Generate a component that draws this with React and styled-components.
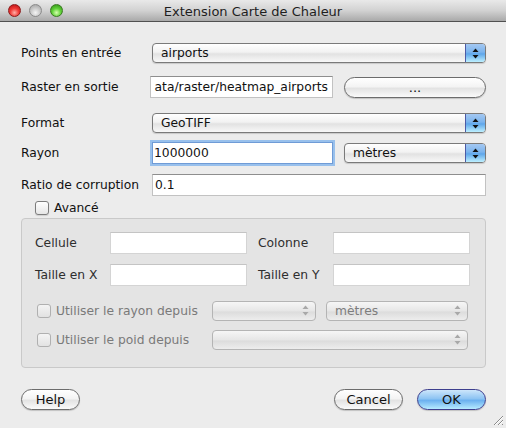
import styled, { createGlobalStyle, css } from "styled-components";

const GlobalStyle = createGlobalStyle`
  html, body {
    margin: 0;
    padding: 0;
    background: #ececec;
  }
  * {
    box-sizing: border-box;
  }
`;

const FONT = `"DejaVu Sans", "Lucida Grande", sans-serif`;

// small pieces
const Arrows = ({ disabled }) => (
  <svg width="7" height="11" viewBox="0 0 7 11">
    <path d="M3.5 0.5 L6.5 4 L0.5 4 Z" fill={disabled ? "#a8a8a8" : "#111"} />
    <path d="M3.5 10.5 L6.5 7 L0.5 7 Z" fill={disabled ? "#a8a8a8" : "#111"} />
  </svg>
);

const Popup = ({ value, disabled, width }) => (
  <Select $disabled={disabled} style={width ? { width } : undefined}>
    <SelectText $disabled={disabled}>{value}</SelectText>
    <ArrowBox $disabled={disabled}>
      <Arrows disabled={disabled} />
    </ArrowBox>
  </Select>
);

const App = () => {
  return (
    <Window>
      <GlobalStyle />
      <TitleBar>
        <Lights>
          <Light $color="red" />
          <Light $color="gray" />
          <Light $color="green" />
        </Lights>
        <Title>Extension Carte de Chaleur</Title>
      </TitleBar>

      <Body>
        <FormRow $top={21} $h={20}>
          <Label>Points en entrée</Label>
          <Popup value="airports" />
        </FormRow>

        <FormRow $top={13} $h={22}>
          <Label>Raster en sortie</Label>
          <Inline>
            <TextField $shift={-2} style={{ width: 183 }} $end>
              ata/raster/heatmap_airports
            </TextField>
            <PushButton $wide>...</PushButton>
          </Inline>
        </FormRow>

        <FormRow $top={15} $h={20}>
          <Label>Format</Label>
          <Popup value="GeoTIFF" />
        </FormRow>

        <FormRow $top={8} $h={24}>
          <Label>Rayon</Label>
          <Inline>
            <TextField $focused style={{ width: 181 }}>1000000</TextField>
            <Popup value="mètres" width={142} />
          </Inline>
        </FormRow>

        <FormRow $top={9} $h={22}>
          <Label>Ratio de corruption</Label>
          <TextField>0.1</TextField>
        </FormRow>

        <CheckRow $top={4}>
          <CheckBox />
          <CheckLabel>Avancé</CheckLabel>
        </CheckRow>

        <Group>
          <GroupGrid>
            <Label $group>Cellule</Label>
            <TextField $plain />
            <Label $group>Colonne</Label>
            <TextField $plain />
            <Label $group>Taille en X</Label>
            <TextField $plain />
            <Label $group>Taille en Y</Label>
            <TextField $plain />
          </GroupGrid>

          <OptionRow $top={14}>
            <CheckRow>
              <CheckBox $disabled />
              <CheckLabel $disabled>Utiliser le rayon depuis</CheckLabel>
            </CheckRow>
            <OptionSelects>
              <Popup disabled value="" width={104} />
              <Popup disabled value="mètres" width={142} />
            </OptionSelects>
          </OptionRow>

          <OptionRow $top={8}>
            <CheckRow>
              <CheckBox $disabled />
              <CheckLabel $disabled>Utiliser le poid depuis</CheckLabel>
            </CheckRow>
            <OptionSelects>
              <Popup disabled value="" width={256} />
            </OptionSelects>
          </OptionRow>
        </Group>

        <ButtonBar>
          <PushButton style={{ width: 59 }}>Help</PushButton>
          <Spacer />
          <PushButton style={{ width: 69 }}>Cancel</PushButton>
          <PushButton $default style={{ width: 69 }}>OK</PushButton>
        </ButtonBar>
      </Body>

      <Grip width="12" height="12" viewBox="0 0 12 12">
        <path d="M11 2 L2 11 M11 6 L6 11 M11 10 L10 11" stroke="#8a8a8a" strokeWidth="1" />
        <path d="M11 3 L3 11 M11 7 L7 11" stroke="#fff" strokeWidth="1" />
      </Grip>
    </Window>
  );
};

export default App;

const Window = styled.div`
  position: relative;
  width: 506px;
  height: 428px;
  background: #ececec;
  font-family: ${FONT};
  font-size: 12.3px;
  color: #111;
  overflow: hidden;
  display: flex;
  flex-direction: column;
`;

const TitleBar = styled.div`
  position: relative;
  height: 22px;
  flex: none;
  display: flex;
  align-items: center;
  justify-content: center;
  background: linear-gradient(#e9e9e9, #d2d2d2 50%, #a9a9a9);
  border-bottom: 1px solid #515151;
`;

const Lights = styled.div`
  position: absolute;
  left: 8px;
  top: 4px;
  display: flex;
  gap: 8px;
`;

const lightColors = {
  red: css`
    background: radial-gradient(circle at 50% 70%, #ffb0a8 0%, #f03a36 45%, #b00c10 100%);
    border: 1px solid #8d1a1a;
  `,
  gray: css`
    background: radial-gradient(circle at 50% 70%, #f4f4f4 0%, #c8c8c8 50%, #9c9c9c 100%);
    border: 1px solid #8a8a8a;
  `,
  green: css`
    background: radial-gradient(circle at 50% 70%, #d8ffb0 0%, #62d23a 45%, #2c8a12 100%);
    border: 1px solid #3a7a22;
  `,
};

const Light = styled.span`
  width: 13px;
  height: 13px;
  border-radius: 50%;
  ${({ $color }) => lightColors[$color]}
`;

const Title = styled.div`
  font-size: 13px;
  color: #1e1e1e;
  padding-top: 1px;
`;

const Body = styled.div`
  flex: 1;
  display: flex;
  flex-direction: column;
  padding: 0 20px 0 21px;
`;

const FormRow = styled.div`
  display: grid;
  grid-template-columns: 131px 1fr;
  align-items: center;
  height: ${({ $h }) => $h}px;
  margin-top: ${({ $top }) => $top}px;
`;

const Label = styled.div`
  white-space: nowrap;
  color: ${({ $group }) => ($group ? "#2e2e2e" : "#111")};
`;

const Inline = styled.div`
  display: flex;
  align-items: center;
  gap: 11px;
`;

const Select = styled.div`
  height: 20px;
  display: flex;
  align-items: stretch;
  border: 1px solid ${({ $disabled }) => ($disabled ? "#b4b4b4" : "#7a7a7a")};
  border-radius: 4px;
  background: ${({ $disabled }) =>
    $disabled
      ? "linear-gradient(#f6f6f6, #e6e6e6 50%, #dcdcdc 55%, #ededed)"
      : "linear-gradient(#ffffff, #f2f2f2 45%, #e2e2e2 55%, #f8f8f8)"};
  box-shadow: ${({ $disabled }) => ($disabled ? "none" : "0 1px 1px rgba(0,0,0,0.15)")};
  overflow: hidden;
`;

const SelectText = styled.div`
  flex: 1;
  padding-left: 8px;
  line-height: 18px;
  color: ${({ $disabled }) => ($disabled ? "#7d7d7d" : "#111")};
`;

const ArrowBox = styled.div`
  width: 20px;
  display: flex;
  align-items: center;
  justify-content: center;
  ${({ $disabled }) =>
    $disabled
      ? css`
          background: transparent;
        `
      : css`
          border-left: 1px solid #4c5ba6;
          background: linear-gradient(#a4c8f2, #7bb4ee 45%, #5ea6ea 55%, #bdf0ff);
        `}
`;

const TextField = styled.div`
  height: 22px;
  margin-left: ${({ $shift }) => $shift || 0}px;
  display: flex;
  align-items: center;
  justify-content: ${({ $end }) => ($end ? "flex-end" : "flex-start")};
  padding: 0 ${({ $end }) => ($end ? "4px" : "2px")} 0 2px;
  background: #fff;
  white-space: nowrap;
  overflow: hidden;
  border: 1px solid #c2c2c2;
  border-top-color: #8e8e8e;
  ${({ $plain }) =>
    $plain &&
    css`
      border-color: #d4d4d4;
      border-top-color: #c4c4c4;
    `}
  ${({ $focused }) =>
    $focused &&
    css`
      border: 1px solid #6f9bd6;
      box-shadow: 0 0 0 2px #98c0ec;
      padding-left: 1px;
    `}
`;

const PushButton = styled.div`
  flex: ${({ $wide }) => ($wide ? 1 : "none")};
  height: 21px;
  display: flex;
  align-items: center;
  justify-content: center;
  border-radius: 11px;
  border: 1px solid ${({ $default }) => ($default ? "#3e3f8e" : "#6c6c6c")};
  background: ${({ $default }) =>
    $default
      ? "linear-gradient(#cde6fb, #8ec4f3 45%, #6cb1ef 55%, #b6ebff)"
      : "linear-gradient(#ffffff, #f4f4f4 45%, #e3e3e3 55%, #fafafa)"};
  box-shadow: 0 1px 1px rgba(0, 0, 0, 0.18);
  color: #111;
  font-size: 13px;
`;

const CheckRow = styled.div`
  display: flex;
  align-items: center;
  gap: 5px;
  margin-top: ${({ $top }) => $top || 0}px;
  margin-left: ${({ $top }) => ($top ? 14 : 2)}px;
  height: 15px;
`;

const CheckBox = styled.span`
  width: 14px;
  height: 14px;
  border-radius: 3px;
  border: 1px solid ${({ $disabled }) => ($disabled ? "#b0b0b0" : "#7c7c7c")};
  background: ${({ $disabled }) =>
    $disabled ? "linear-gradient(#f4f4f4, #e2e2e2)" : "linear-gradient(#ffffff, #e6e6e6)"};
  box-shadow: ${({ $disabled }) => ($disabled ? "none" : "0 1px 1px rgba(0,0,0,0.12)")};
`;

const CheckLabel = styled.span`
  color: ${({ $disabled }) => ($disabled ? "#7a7a7a" : "#111")};
`;

const Group = styled.div`
  margin-top: 3px;
  height: 150px;
  border: 1px solid #c9c9c9;
  border-radius: 4px;
  background: #e4e4e4;
  padding: 13px 15px 0 13px;
`;

const GroupGrid = styled.div`
  display: grid;
  grid-template-columns: 64px 137px 64px 137px;
  grid-auto-rows: 22px;
  column-gap: 11px;
  row-gap: 10px;
  align-items: center;
`;

const OptionRow = styled.div`
  display: flex;
  align-items: center;
  justify-content: space-between;
  height: 21px;
  margin-top: ${({ $top }) => $top}px;
`;

const OptionSelects = styled.div`
  display: flex;
  gap: 10px;
  padding-right: 2px;
`;

const ButtonBar = styled.div`
  display: flex;
  align-items: center;
  gap: 14px;
  margin-top: 21px;
`;

const Spacer = styled.div`
  flex: 1;
`;

const Grip = styled.svg`
  position: absolute;
  right: 2px;
  bottom: 2px;
`;
